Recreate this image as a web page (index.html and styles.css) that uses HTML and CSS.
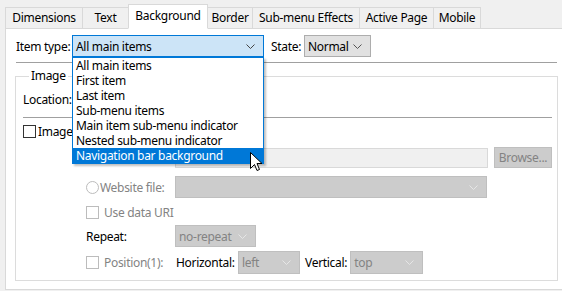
FILE: index.html
```html
<!DOCTYPE html>
<html lang="en">
<head>
    <meta charset="UTF-8">
    <title>Menu Background</title>
    <link rel="stylesheet" href="styles.css">
</head>
<body>
    <div class="tabs">
        <div class="tab tab-dim">Dimensions</div>
        <div class="tab tab-text">Text</div>
        <div class="tab tab-bg active">Background</div>
        <div class="tab tab-border">Border</div>
        <div class="tab tab-sub">Sub-menu Effects</div>
        <div class="tab tab-active">Active Page</div>
        <div class="tab tab-mobile">Mobile</div>
    </div>

    <div class="panel">
        <div class="row-top">
            <span class="lbl-type">Item type:</span>
            <div class="select select-focus select-type">
                <span>All main items</span>
                <svg class="chev" width="9" height="5" viewBox="0 0 9 5"><path d="M0.5 0.5 L4.5 4.5 L8.5 0.5" fill="none" stroke="#444" stroke-width="1"/></svg>
                <ul class="droplist">
                    <li>All main items</li>
                    <li>First item</li>
                    <li>Last item</li>
                    <li>Sub-menu items</li>
                    <li>Main item sub-menu indicator</li>
                    <li>Nested sub-menu indicator</li>
                    <li class="hl">Navigation bar background</li>
                </ul>
                <svg class="cursor" width="13" height="21" viewBox="0 0 13 21"><path d="M0.5 0.5 L0.5 16.5 L4.5 12.5 L7 18.5 L9.5 17.5 L7 11.5 L12 11.5 Z" fill="#fff" stroke="#000" stroke-width="1" stroke-linejoin="miter"/></svg>
            </div>
            <span class="lbl-state">State:</span>
            <div class="select select-state">
                <span>Normal</span>
                <svg class="chev" width="9" height="5" viewBox="0 0 9 5"><path d="M0.5 0.5 L4.5 4.5 L8.5 0.5" fill="none" stroke="#555" stroke-width="1"/></svg>
            </div>
        </div>

        <div class="sep"></div>

        <fieldset class="group">
            <legend>Image</legend>
            <div class="loc">Location:</div>
            <div class="sep2"></div>

            <div class="row row-check">
                <span class="check"></span>
                <span>Image</span>
            </div>

            <div class="row row-file">
                <div class="field"></div>
                <div class="btn">Browse...</div>
            </div>

            <div class="row row-web">
                <span class="radio"></span>
                <span class="lbl-col muted">Website file:</span>
                <div class="select select-off select-web">
                    <span></span>
                    <svg class="chev" width="9" height="5" viewBox="0 0 9 5"><path d="M0.5 0.5 L4.5 4.5 L8.5 0.5" fill="none" stroke="#e6e6e6" stroke-width="1"/></svg>
                </div>
            </div>

            <div class="row row-uri">
                <span class="check off"></span>
                <span class="muted">Use data URI</span>
            </div>

            <div class="row row-repeat">
                <span class="lbl-repeat">Repeat:</span>
                <div class="select select-off select-repeat">
                    <span>no-repeat</span>
                    <svg class="chev" width="9" height="5" viewBox="0 0 9 5"><path d="M0.5 0.5 L4.5 4.5 L8.5 0.5" fill="none" stroke="#e6e6e6" stroke-width="1"/></svg>
                </div>
            </div>

            <div class="row row-pos">
                <span class="check off"></span>
                <span class="lbl-pos muted">Position(1):</span>
                <span class="lbl-hor">Horizontal:</span>
                <div class="select select-off select-hor">
                    <span>left</span>
                    <svg class="chev" width="9" height="5" viewBox="0 0 9 5"><path d="M0.5 0.5 L4.5 4.5 L8.5 0.5" fill="none" stroke="#e6e6e6" stroke-width="1"/></svg>
                </div>
                <span class="lbl-ver">Vertical:</span>
                <div class="select select-off select-ver">
                    <span>top</span>
                    <svg class="chev" width="9" height="5" viewBox="0 0 9 5"><path d="M0.5 0.5 L4.5 4.5 L8.5 0.5" fill="none" stroke="#e6e6e6" stroke-width="1"/></svg>
                </div>
            </div>
        </fieldset>
    </div>
</body>
</html>
```

FILE: styles.css
```css
body {
    margin: 0;
    background-color: #f0f0f0;
    font-family: "Noto Sans", "Open Sans", sans-serif;
    font-size: 12px;
    letter-spacing: -0.3px;
    color: #000;
    white-space: nowrap;
    overflow: hidden;
}
.tabs {
    display: flex;
    align-items: flex-end;
    padding: 4px 0 0 5px;
    height: 24px;
}
.tab {
    box-sizing: border-box;
    flex-shrink: 0;
    height: 22px;
    border: 1px solid #d9d9d9;
    margin-left: -1px;
    background-color: #f0f0f0;
    text-align: center;
    line-height: 20px;
    margin-bottom: -1px;
}
.tab:first-child {
    margin-left: 0;
}
.tab.active {
    height: 25px;
    background-color: #fff;
    border-bottom-color: #fff;
    line-height: 21px;
    position: relative;
}
.tab-dim { width: 78px; }
.tab-text { width: 47px; }
.tab-bg { width: 80px; }
.tab-border { width: 46px; }
.tab-sub { width: 108px; }
.tab-active { width: 75px; }
.tab-mobile { width: 48px; }

.panel {
    box-sizing: border-box;
    width: 570px;
    height: 262px;
    margin-left: 5px;
    background-color: #fff;
    border: 1px solid #d9d9d9;
    padding: 6px 0 0 10px;
}
.row-top {
    display: flex;
    align-items: center;
    height: 22px;
}
.row-top > span,
.row > span {
    flex-shrink: 0;
}
.lbl-type {
    width: 56px;
}
.lbl-state {
    margin-left: 7px;
    width: 33px;
}
.select {
    box-sizing: border-box;
    flex-shrink: 0;
    height: 22px;
    display: flex;
    align-items: center;
    justify-content: space-between;
    padding: 0 8px 0 3px;
    border: 1px solid #adadad;
    background-color: #e1e1e1;
    position: relative;
}
.select-focus {
    background-color: #cce4f7;
    border-color: #0078d7;
}
.select-off {
    background-color: #cccccc;
    border-color: #bfbfbf;
    color: #838383;
}
.select-type { width: 192px; }
.select-state { width: 67px; }
.select-web { width: 312px; }
.select-repeat { width: 81px; }
.select-hor { width: 62px; height: 23px; }
.select-ver { width: 73px; height: 23px; }

.droplist {
    position: absolute;
    left: -1px;
    top: 21px;
    width: 192px;
    box-sizing: border-box;
    margin: 0;
    padding: 0;
    list-style: none;
    background-color: #fff;
    border: 1px solid #0078d7;
    box-shadow: 2px 2px 2px rgba(0, 0, 0, 0.25);
    z-index: 5;
}
.droplist li {
    height: 15px;
    line-height: 15px;
    padding-left: 3px;
}
.droplist li.hl {
    background-color: #0078d7;
    color: #fff;
}
.cursor {
    position: absolute;
    left: 177px;
    top: 116px;
    z-index: 6;
}

.sep {
    width: 541px;
    height: 1px;
    margin-top: 5px;
    background-color: #a0a0a0;
}
.group {
    box-sizing: border-box;
    width: 543px;
    margin: 5px 0 0 -1px;
    padding: 8px 0 6px 7px;
    border: 1px solid #dcdcdc;
}
.group legend {
    padding: 0 2px;
    margin-left: 6px;
    line-height: 16px;
}
.loc {
    line-height: 16px;
}
.sep2 {
    width: 529px;
    height: 1px;
    margin-top: 9px;
    background-color: #a0a0a0;
}
.row {
    display: flex;
    align-items: center;
}
.row-check {
    height: 16px;
    margin-top: 5px;
}
.check {
    box-sizing: border-box;
    width: 13px;
    height: 13px;
    border: 1px solid #333;
    background-color: #fff;
    margin-right: 2px;
}
.check.off {
    border-color: #bcbcbc;
    margin-right: 5px;
}
.radio {
    box-sizing: border-box;
    width: 13px;
    height: 13px;
    border: 1px solid #bcbcbc;
    border-radius: 50%;
    margin-right: 1px;
}
.muted {
    color: #838383;
}
.row-file {
    margin-top: 8px;
    padding-left: 152px;
}
.field {
    box-sizing: border-box;
    width: 313px;
    height: 20px;
    border: 1px solid #d9d9d9;
    background-color: #f0f0f0;
}
.btn {
    box-sizing: border-box;
    width: 58px;
    height: 21px;
    margin-left: 6px;
    border: 1px solid #bfbfbf;
    background-color: #cccccc;
    color: #838383;
    text-align: center;
    line-height: 19px;
}
.row-web {
    margin-top: 8px;
    padding-left: 63px;
}
.lbl-col {
    width: 75px;
}
.row-uri {
    height: 16px;
    margin-top: 6px;
    padding-left: 63px;
}
.row-repeat {
    margin-top: 5px;
    padding-left: 63px;
}
.lbl-repeat {
    width: 89px;
}
.row-pos {
    margin-top: 4px;
    padding-left: 63px;
}
.lbl-pos {
    width: 72px;
}
.lbl-hor {
    width: 62px;
}
.lbl-ver {
    margin: 0 3px 0 5px;
}
```
